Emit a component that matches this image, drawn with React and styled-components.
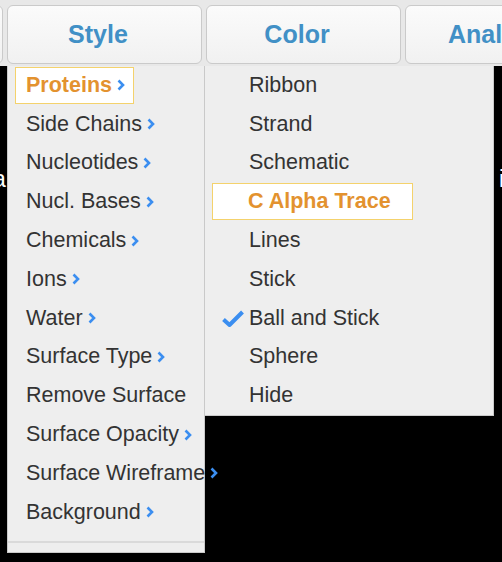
import React from 'react';
import styled, { createGlobalStyle } from 'styled-components';

const GlobalStyle = createGlobalStyle`
    body {
        margin: 0;
        background: #000;
        font-family: "Liberation Sans", Arial, Helvetica, sans-serif;
    }
`;

const Page = styled.div`
    position: relative;
    width: 502px;
    height: 562px;
    overflow: hidden;
    background: #000;
    display: flex;
    flex-direction: column;
`;

const TopBar = styled.div`
    display: flex;
    gap: 4px;
    height: 66px;
    padding-top: 5px;
    box-sizing: border-box;
    background: #e8e8e8;
    flex-shrink: 0;
`;

const TabButton = styled.div`
    flex: 0 0 195px;
    height: 59px;
    box-sizing: border-box;
    margin-left: ${p => (p.$first ? '-192px' : '0')};
    border: 1px solid #cacaca;
    border-radius: 6px;
    background: linear-gradient(#fbfbfb, #f1f1f1);
    display: flex;
    align-items: center;
    justify-content: ${p => (p.$clip ? 'flex-start' : 'center')};
    padding: ${p => (p.$clip ? '0 0 0 42px' : '0 13px 0 0')};
    color: #4190c6;
    font-weight: bold;
    font-size: 25px;
    white-space: nowrap;
`;

const Viewer = styled.div`
    flex: 1;
    padding-top: 100px;
`;

const Caption = styled.div`
    display: flex;
    justify-content: space-between;
    color: #fff;
    font-size: 23px;
    margin: 0 -2px 0 -7px;
`;

const Menu = styled.div`
    position: absolute;
    top: 66px;
    left: ${p => p.$left}px;
    width: ${p => p.$width}px;
    background: #eeeeee;
    border: 1px solid #c9c9c9;
    border-top: none;
    box-sizing: border-box;
    display: flex;
    flex-direction: column;
`;

const Row = styled.div`
    height: 38.8px;
    display: flex;
    align-items: center;
    padding-left: ${p => p.$pad}px;
    position: relative;
`;

const Label = styled.div`
    display: flex;
    align-items: center;
    gap: 5px;
    font-size: 21.5px;
    color: ${p => (p.$active ? '#e3922f' : '#333')};
    font-weight: ${p => (p.$active ? 'bold' : 'normal')};
    white-space: nowrap;
`;

const HighlightBox = styled.div`
    height: 37px;
    box-sizing: border-box;
    display: flex;
    align-items: center;
    margin-left: ${p => p.$offset}px;
    width: ${p => (p.$width ? `${p.$width}px` : 'auto')};
    padding: 0 8px 0 ${p => p.$pad}px;
    background: #fff;
    border: 1px solid #f4d26c;
`;

const Separator = styled.div`
    margin: 9px 0 9px;
    border-top: 2px solid #dadada;
`;

const CheckMark = styled.svg`
    position: absolute;
    left: 17px;
    top: 11px;
`;

const Chevron = () => (
    <svg width="8" height="12" viewBox="0 0 8 12">
        <path d="M1.5 1.5 L6 6 L1.5 10.5" fill="none" stroke="#3b8ef0" strokeWidth="2.6" />
    </svg>
);

const mainItems = [
    ['Proteins', true],
    ['Side Chains', true],
    ['Nucleotides', true],
    ['Nucl. Bases', true],
    ['Chemicals', true],
    ['Ions', true],
    ['Water', true],
    ['Surface Type', true],
    ['Remove Surface', false],
    ['Surface Opacity', true],
    ['Surface Wireframe', true],
    ['Background', true],
];

const subItems = ['Ribbon', 'Strand', 'Schematic', 'C Alpha Trace', 'Lines', 'Stick', 'Ball and Stick', 'Sphere', 'Hide'];

const App = () => {
    return (
        <>
            <GlobalStyle />
            <Page>
                <TopBar>
                    <TabButton $first>View</TabButton>
                    <TabButton>Style</TabButton>
                    <TabButton>Color</TabButton>
                    <TabButton $clip>Analysis</TabButton>
                </TopBar>
                <Viewer>
                    <Caption>
                        <span>a</span>
                        <span>i</span>
                    </Caption>
                </Viewer>

                <Menu $left={7} $width={198}>
                    {mainItems.map(([name, sub], i) =>
                        i === 0 ? (
                            <Row key={name} $pad={0}>
                                <HighlightBox $offset={7} $pad={10}>
                                    <Label $active>
                                        {name}
                                        <Chevron />
                                    </Label>
                                </HighlightBox>
                            </Row>
                        ) : (
                            <Row key={name} $pad={18}>
                                <Label>
                                    {name}
                                    {sub && <Chevron />}
                                </Label>
                            </Row>
                        )
                    )}
                    <Separator />
                </Menu>

                <Menu $left={204} $width={290}>
                    {subItems.map(name =>
                        name === 'C Alpha Trace' ? (
                            <Row key={name} $pad={0}>
                                <HighlightBox $offset={7} $pad={35} $width={201}>
                                    <Label $active>{name}</Label>
                                </HighlightBox>
                            </Row>
                        ) : (
                            <Row key={name} $pad={44}>
                                {name === 'Ball and Stick' && (
                                    <CheckMark width="22" height="17" viewBox="0 0 22 17">
                                        <path d="M1.5 9.5 L7.5 15 L20.5 2" fill="none" stroke="#3b8ef0" strokeWidth="4" strokeLinejoin="round" />
                                    </CheckMark>
                                )}
                                <Label>{name}</Label>
                            </Row>
                        )
                    )}
                </Menu>
            </Page>
        </>
    );
};

export default App;
